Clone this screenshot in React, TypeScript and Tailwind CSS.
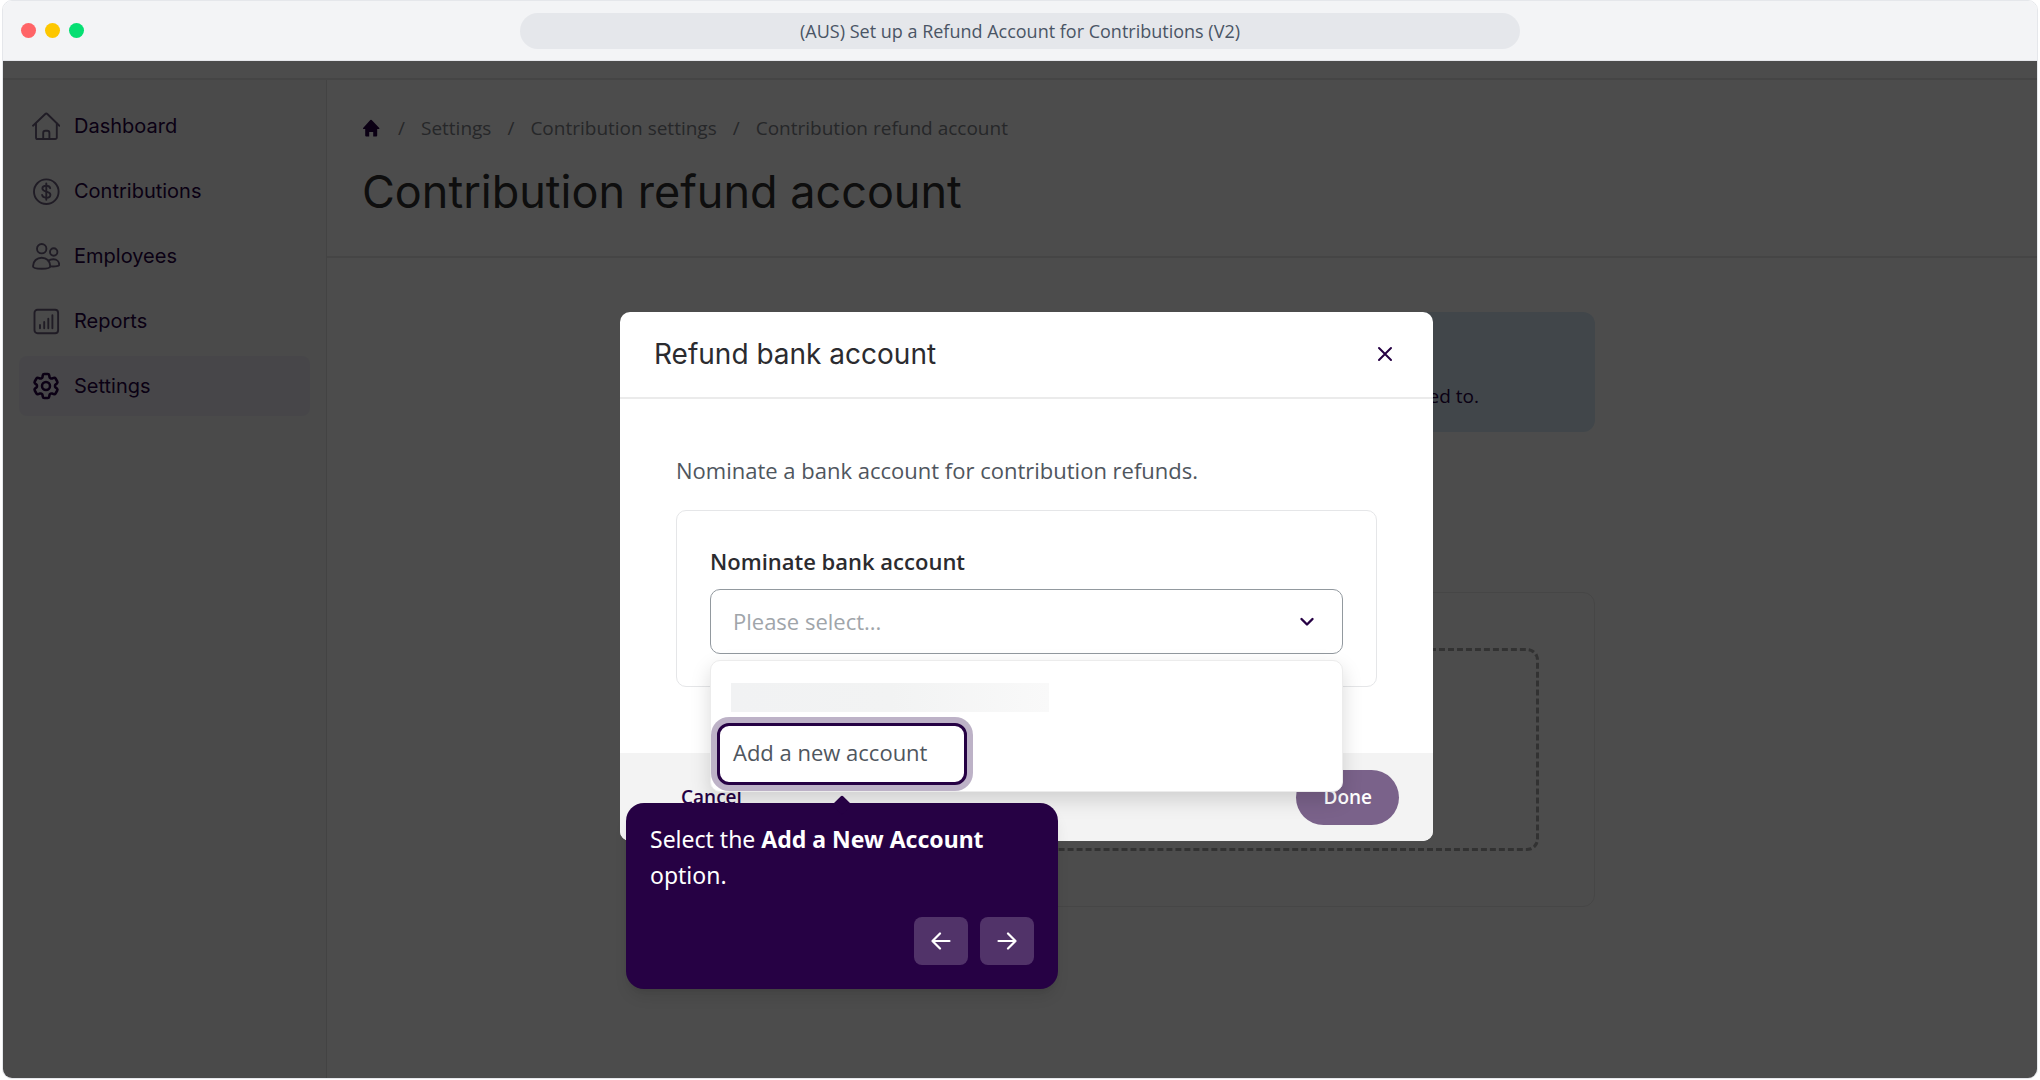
import { HiOutlineCog6Tooth } from "react-icons/hi2";

const navItems = [
  { label: "Dashboard", icon: HouseIcon },
  { label: "Contributions", icon: DollarIcon },
  { label: "Employees", icon: PeopleIcon },
  { label: "Reports", icon: ReportIcon },
  { label: "Settings", icon: GearIcon, active: true },
];

const crumbs = [
  "Settings",
  "Contribution settings",
  "Contribution refund account",
];

function Stroke({ children }: any) {
  return (
    <svg
      viewBox="0 0 28 28"
      fill="none"
      stroke="currentColor"
      strokeWidth="1.9"
      strokeLinecap="round"
      strokeLinejoin="round"
      className="size-7"
      aria-hidden="true"
    >
      {children}
    </svg>
  );
}

function HouseIcon() {
  return (
    <Stroke>
      <path d="M1 13.7 13 2.2a1.9 1.9 0 0 1 2.6 0L27.4 13.7" />
      <path d="M4 11.4V25.4A1.6 1.6 0 0 0 5.6 27H23.2A1.6 1.6 0 0 0 24.8 25.4V11.4" />
      <path d="M11.2 27V21a2.2 2.2 0 0 1 2.2-2.2h1.8A2.2 2.2 0 0 1 17.4 21V27" />
    </Stroke>
  );
}

function DollarIcon() {
  return (
    <Stroke>
      <circle cx="14.3" cy="14.7" r="12.3" />
      <path d="M14.3 6.5V22.8" />
      <path d="M18.2 11.2C17.8 9.5 16.4 8.8 14.3 8.8c-2.2 0-3.9 1-3.9 2.8 0 4 8 2 8 6.1 0 1.9-1.8 3-4.1 3-2.3 0-3.9-1-4.2-2.8" />
    </Stroke>
  );
}

function PeopleIcon() {
  return (
    <Stroke>
      <circle cx="9.7" cy="6.7" r="4.7" />
      <circle cx="21.7" cy="10" r="3.7" />
      <path d="M1 24.3C1 19 5 15.7 9.7 15.7S18.3 19 18.3 24.3C18.3 27.6 1 27.6 1 24.3Z" />
      <path d="M16.4 18.8C18 17.6 19.7 17.3 21.4 17.3c3.4 0 5.8 2.3 5.8 5.4 0 1.3-3.2 2.1-8.9 1.7" />
    </Stroke>
  );
}

function ReportIcon() {
  return (
    <Stroke>
      <rect x="2.5" y="2.7" width="23.6" height="23.6" rx="3" />
      <path d="M8 21.2V18M12.2 21.2V15M16.3 21.2V11.7M20.4 21.2V8.3" />
    </Stroke>
  );
}

function GearIcon() {
  return <HiOutlineCog6Tooth strokeWidth="1.9" className="-m-0.5 size-8" />;
}

function Sidebar() {
  return (
    <nav className="w-[324px] shrink-0 border-r border-[#e0e0e0] bg-[#f7f7f7] px-4 pt-4">
      <ul className="flex flex-col gap-[5px]">
        {navItems.map(({ label, icon: Icon, active }) => (
          <li key={label}>
            <a
              href="#"
              className={
                "flex h-[60px] items-center gap-[14px] rounded-lg pl-[13px] font-[Inter,sans-serif] text-[20px] text-[#260144] " +
                (active ? "bg-[#edecf3]" : "")
              }
            >
              <span className={active ? "" : "text-[#6b5f7e]"}>
                <Icon />
              </span>
              {label}
            </a>
          </li>
        ))}
      </ul>
    </nav>
  );
}

function Page() {
  return (
    <main className="min-w-0 flex-1">
      <header className="h-[178px] border-b-2 border-[#e8e8e8] pt-8 pl-[35px]">
        <div className="flex h-8 items-center text-[19px] text-[#7f848a]">
          <a href="#" aria-label="Home" className="pr-0.5 text-[#260144]">
            <svg viewBox="0 0 18 18" fill="currentColor" className="size-[18px]">
              <path d="M8.3 1q.7-.7 1.4 0L17.3 9q.6 1-.5 1H15.2V16.4q0 1-1 1H11.2V13H7.2V17.4H4.2q-1 0-1-1V10H1.6q-1.1 0-.5-1Z" />
            </svg>
          </a>
          {crumbs.map((crumb) => (
            <span key={crumb} className="flex">
              <span className="px-4">/</span>
              <a href="#">{crumb}</a>
            </span>
          ))}
        </div>
        <h1 className="mt-4 font-[Inter,sans-serif] text-[45px] leading-[64px] text-[#303030]">
          Contribution refund account
        </h1>
      </header>
      <div className="mx-auto mt-[54px] w-full max-w-[826px]">
        <div className="flex h-[120px] items-end justify-end rounded-xl bg-[#d9eaf7] pr-[116px] pb-[22px] text-[19px] leading-7 text-[#260144]">
          <p>ed to.</p>
        </div>
        <div className="mt-40 rounded-xl border border-[#e9e9e9] p-[55px]">
          <div className="h-[203px] rounded-xl border-3 border-dashed border-[#a8a8a8]" />
        </div>
      </div>
    </main>
  );
}

function Tooltip() {
  return (
    <div className="absolute top-20 left-1/2 z-10 w-[432px] -translate-x-1/2 rounded-[18px] bg-[#260144] p-6 pt-[18px] font-['Noto_Sans',sans-serif] text-white shadow-lg">
      <span className="absolute -top-[5px] left-1/2 size-[14px] -translate-x-1/2 rotate-45 rounded-xs bg-[#260144]" />
      <p className="relative text-[23px] leading-9">
        Select the <strong className="font-bold">Add a New Account</strong>{" "}
        option.
      </p>
      <div className="mt-6 flex justify-end gap-3">
        <button
          type="button"
          aria-label="Back"
          className="flex h-12 w-[54px] items-center justify-center rounded-lg bg-white/20"
        >
          <ArrowIcon d="M18.5 10H1.5M9 2.5 1.5 10 9 17.5" />
        </button>
        <button
          type="button"
          aria-label="Next"
          className="flex h-12 w-[54px] items-center justify-center rounded-lg bg-white/20"
        >
          <ArrowIcon d="M1.5 10H18.5M11 2.5 18.5 10 11 17.5" />
        </button>
      </div>
    </div>
  );
}

function ArrowIcon({ d }: { d: string }) {
  return (
    <svg
      viewBox="0 0 20 20"
      fill="none"
      stroke="currentColor"
      strokeWidth="2.2"
      strokeLinecap="round"
      strokeLinejoin="round"
      className="size-5"
    >
      <path d={d} />
    </svg>
  );
}

function AccountMenu() {
  return (
    <ul className="absolute top-[71px] left-0 w-full rounded-[10px] border border-[#ececec] bg-white pt-[22px] pb-1.5 shadow-[0_8px_20px_rgba(0,0,0,0.15)]">
      <li className="ml-5 h-[29px] w-[318px] bg-linear-to-r from-[#f1f2f3] via-[#f2f3f3] to-[#f9f9f9]" />
      <li className="relative mt-[11px] ml-1.5 w-[250px]">
        <button
          type="button"
          className="h-[62px] w-full rounded-xl border-3 border-[#260144] bg-white pb-1 pl-[13px] text-left text-[22px] text-[#4f565e] ring-6 ring-[#260144]/30"
        >
          Add a new account
        </button>
        <Tooltip />
      </li>
    </ul>
  );
}

function RefundModal() {
  return (
    <div
      role="dialog"
      aria-labelledby="modal-title"
      className="w-[813px] rounded-[10px] bg-white"
    >
      <div className="flex h-[87px] items-center justify-between border-b-2 border-[#ebebeb] pr-[38px] pb-px pl-[34px]">
        <h2
          id="modal-title"
          className="font-[Inter,sans-serif] text-[28px] leading-9 text-[#2b2b2f]"
        >
          Refund bank account
        </h2>
        <button type="button" aria-label="Close" className="p-0.5 text-[#260144]">
          <svg
            viewBox="0 0 16 16"
            fill="none"
            stroke="currentColor"
            strokeWidth="2"
            strokeLinecap="round"
            className="size-4"
          >
            <path d="m2 2 12 12M14 2 2 14" />
          </svg>
        </button>
      </div>
      <div className="px-14 pt-[55px] pb-[66px] text-[22px]">
        <p className="leading-8 text-[#4f565e]">
          Nominate a bank account for contribution refunds.
        </p>
        <div className="mt-6 rounded-[10px] border border-[#e5e6e8] px-[33px] pt-[34px] pb-8">
          <label
            htmlFor="account"
            className="block leading-8 font-semibold text-[#2b2b2f]"
          >
            Nominate bank account
          </label>
          <div className="relative mt-3">
            <select
              id="account"
              className="block h-[65px] w-full appearance-none rounded-[10px] border border-[#92999f] bg-white px-[22px] text-[#a0a5aa]"
            >
              <option>Please select...</option>
            </select>
            <svg
              viewBox="0 0 16 10"
              fill="none"
              stroke="#260144"
              strokeWidth="2.4"
              strokeLinecap="round"
              strokeLinejoin="round"
              className="pointer-events-none absolute top-7 right-7 h-2.5 w-4"
            >
              <path d="M2.5 2 8 7.5 13.5 2" />
            </svg>
            <AccountMenu />
          </div>
        </div>
      </div>
      <div className="flex h-[88px] items-center justify-between rounded-b-[10px] bg-[#f3f3f3] pr-[34px] pl-[61px] text-[19px] font-semibold">
        <button type="button" className="text-[#260144]">
          Cancel
        </button>
        <button
          type="button"
          className="h-[55px] rounded-full bg-[#7a628a] px-[27px] text-white"
        >
          Done
        </button>
      </div>
    </div>
  );
}

export default function App() {
  return (
    <div className="flex min-h-screen flex-col bg-white px-0.5 pb-px font-['Open_Sans',sans-serif]">
      <div className="flex flex-1 flex-col overflow-hidden rounded-[10px] border border-[#e5e7eb]">
        <div className="grid h-[60px] grid-cols-[1fr_1000px_1fr] items-center border-b border-[#e5e7eb] bg-[#f3f4f6] px-[18px]">
          <div className="flex gap-[9px]">
            <span className="size-[15px] rounded-full bg-[#ff6467]" />
            <span className="size-[15px] rounded-full bg-[#fdc700]" />
            <span className="size-[15px] rounded-full bg-[#05df72]" />
          </div>
          <div className="h-9 rounded-full bg-[#e5e7eb] text-center text-[18px] leading-9 text-[#4a5565]">
            (AUS) Set up a Refund Account for Contributions (V2)
          </div>
        </div>
        <div className="relative flex flex-1 flex-col">
          <div className="h-[19px] border-b-2 border-[#e6e6e6]" />
          <div className="flex flex-1">
            <Sidebar />
            <Page />
          </div>
          <div className="absolute inset-0 flex items-start justify-center bg-black/70 pt-[251px] pl-[13px]">
            <RefundModal />
          </div>
        </div>
      </div>
    </div>
  );
}
